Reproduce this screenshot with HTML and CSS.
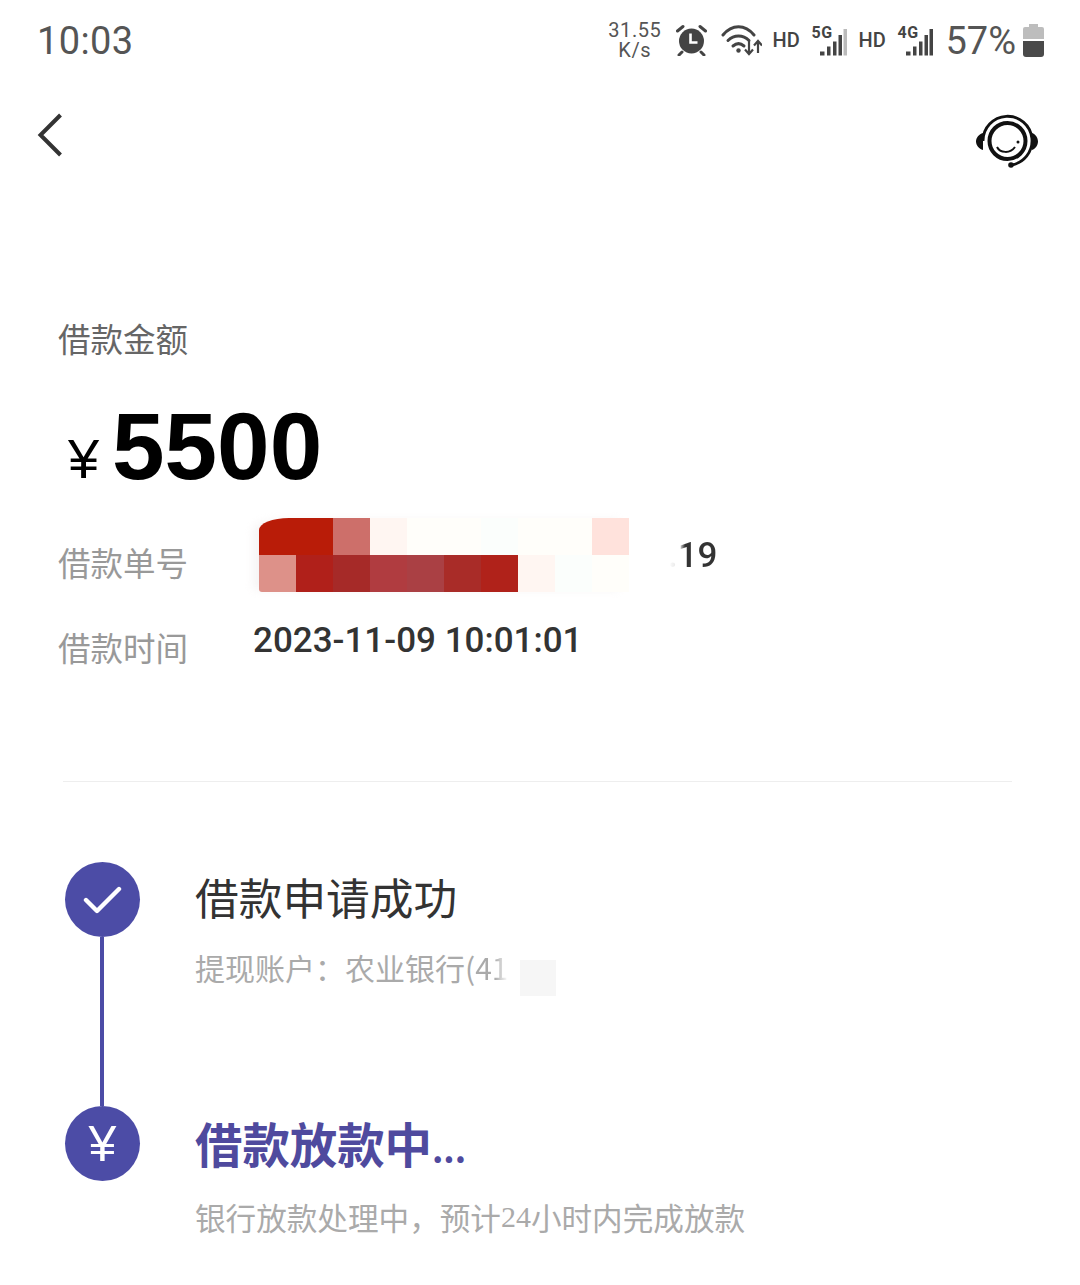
FILE: index.html
```html
<!DOCTYPE html>
<html lang="zh-CN">
<head>
  <meta charset="UTF-8" />
  <meta name="viewport" content="width=device-width, initial-scale=1.0"/>
  <title>借款详情</title>
  <link rel="stylesheet" href="styles.css">
</head>
<body>
  <div class="status">
    <span class="time">10:03</span>
    <div class="status-right">
      <span class="speed">31.55<br>K/s</span>
      <svg class="ic-alarm" width="31" height="32" viewBox="0 0 31 32">
        <circle cx="15.500" cy="17" r="12.500" fill="#444"/>
        <path d="M14.500 9.500v9h7" fill="none" stroke="#fff" stroke-width="2.600"/>
        <path d="M1.500 7l5.500-4.500M29.500 7L24 2.500M6 28l-3 3M25 28l3 3" stroke="#444" stroke-width="3" fill="none" stroke-linecap="round"/>
      </svg>
      <svg class="ic-wifi" width="41" height="32" viewBox="0 0 41 32">
        <g fill="none" stroke="#444" stroke-width="3" stroke-linecap="round">
          <path d="M2 11C11 0 24 0 33 11"/>
          <path d="M7 16.500c6-6 15-6 21 0"/>
          <path d="M12 22c3.500-3 7.500-3 11 0"/>
        </g>
        <circle cx="17.500" cy="26.500" r="2.200" fill="#444"/>
        <path d="M28 17v13M24 25.500l4 4.500 4-4.500M37 29V17M33 21.500L37 17l4 4.500" fill="none" stroke="#444" stroke-width="2.200"/>
      </svg>
      <span class="hd">HD</span>
      <div class="net">
        <span class="net-label">5G</span>
        <svg width="36" height="32" viewBox="0 0 36 32">
          <path d="M9 27.500h4.500v4H9zM16 22.500h3.500v9H16zM22 17.500h3.500v14H22zM27.500 11H31v20.500h-3.500z" fill="#444"/>
          <path d="M32.500 5H36v26.500h-3.500z" fill="#bbb"/>
        </svg>
      </div>
      <span class="hd hd-2">HD</span>
      <div class="net">
        <span class="net-label">4G</span>
        <svg width="36" height="32" viewBox="0 0 36 32">
          <path d="M9 27.500h4.500v4H9zM16 22.500h3.500v9H16zM22 17.500h3.500v14H22zM27.500 11H31v20.500h-3.500zM32.500 5H36v26.500h-3.500z" fill="#444"/>
        </svg>
      </div>
      <span class="pct">57%</span>
      <svg class="ic-batt" width="21" height="33" viewBox="0 0 21 33">
        <path d="M6 0h9v3h4a2 2 0 0 1 2 2v10H0V5a2 2 0 0 1 2-2h4z" fill="#bdbdbd"/>
        <path d="M0 17h21v13a3 3 0 0 1-3 3H3a3 3 0 0 1-3-3z" fill="#4a4a4a"/>
      </svg>
    </div>
  </div>

  <div class="nav">
    <svg class="ic-back" width="26" height="44" viewBox="0 0 26 44">
      <path d="M23.500 2L3.500 22l20 20" fill="none" stroke="#333" stroke-width="4"/>
    </svg>
    <svg width="62" height="62" viewBox="16 6 62 62">
      <circle cx="47.500" cy="41" r="18" fill="none" stroke="#111" stroke-width="4"/>
      <path d="M23 41A24.500 24.500 0 1 1 51 65" fill="none" stroke="#111" stroke-width="2.800"/>
      <path d="M23 33v17C19 49 16 45 16 41.500S19 34 23 33zM72 33v17c3.500-1 6-5 6-8.500S75.500 34 72 33z" fill="#111"/>
      <circle cx="51" cy="65" r="2.800" fill="#111"/>
      <path d="M37 47c3 6 13 7 18 0" fill="none" stroke="#111" stroke-width="2"/>
      <circle cx="58" cy="42" r="1.500" fill="#111"/>
    </svg>
  </div>

  <div class="summary">
    <div class="label">借款金额</div>
    <div class="amount"><span class="yen">¥</span>5500</div>

    <div class="row row-no">
      <div class="row-label">借款单号</div>
      <div class="mosaic">
        <i class="m1"></i><i class="m1"></i><i class="m2"></i><i class="m3"></i><i class="m4"></i><i class="m4"></i><i class="m5"></i><i class="m4"></i><i class="m4"></i><i class="m6"></i>
        <i class="m7"></i><i class="m8"></i><i class="m9"></i><i class="m10"></i><i class="m11"></i><i class="m12"></i><i class="m13"></i><i class="m3"></i><i class="m5"></i><i class="m4"></i>
      </div>
      <div class="row-tail">.19</div>
    </div>
    <div class="row row-time">
      <div class="row-label">借款时间</div>
      <div class="row-value">2023-11-09 10:01:01</div>
    </div>
    <div class="divider"></div>
  </div>

  <div class="timeline">
    <div class="step step-first">
      <div class="rail">
        <div class="dot">
          <svg width="40" height="32" viewBox="0 0 40 32">
            <path d="M3 16l11 11L36 5" fill="none" stroke="#fff" stroke-width="4.400" stroke-linecap="round" stroke-linejoin="round"/>
          </svg>
        </div>
        <div class="line"></div>
      </div>
      <div class="step-body">
        <div class="step-title">借款申请成功</div>
        <div class="step-sub">提现账户：农业银行(<span class="fade">41</span><span class="patch"></span></div>
      </div>
    </div>
    <div class="step">
      <div class="rail">
        <div class="dot dot-yen">¥</div>
      </div>
      <div class="step-body step-body-2">
        <div class="step-title active">借款放款中<span class="dots">...</span></div>
        <div class="step-sub">银行放款处理中，预计<span class="num">24</span>小时内完成放款</div>
      </div>
    </div>
  </div>
</body>
</html>
```

FILE: styles.css
```css
body { margin: 0; background: #fff; font-family: "Noto Sans CJK SC", "Liberation Sans", sans-serif; color: #333; }

.status { height: 80px; display: flex; align-items: center; justify-content: space-between; padding: 0 36px 0 37px; font-family: Roboto, sans-serif; color: #555; }
.time { font-size: 38px; letter-spacing: .4px; margin-top: 1px; }
.status-right { display: flex; align-items: center; }
.speed { font-size: 20px; line-height: 20px; text-align: center; letter-spacing: .6px; color: #555; }
.ic-alarm { margin-left: 15px; }
.ic-wifi { margin-left: 14px; }
.hd { font-size: 20px; font-weight: 500; color: #444; margin-left: 10px; width: 27px; }
.net { position: relative; margin-left: 12px; }
.net svg { display: block; }
.net-label { position: absolute; left: 0; top: -1px; font-size: 16px; font-weight: 700; letter-spacing: .5px; color: #444; }
.hd-2 { margin-left: 11px; }
.pct { font-size: 38px; margin-left: 12px; margin-top: 1px; color: #555; }
.ic-batt { margin-left: 7px; }

.nav { height: 114px; display: flex; align-items: center; justify-content: space-between; padding: 0 42px 0 37px; }
.ic-back { margin-top: -4px; }

.summary { padding: 0 58px; margin-top: 124px; }
.label { font-size: 32.500px; line-height: 40px; color: #666; }
.amount { margin-top: 38px; height: 100px; line-height: 100px; font-family: "Liberation Sans", sans-serif; font-size: 94.500px; font-weight: 700; color: #000; display: flex; }
.yen { font-size: 56px; font-weight: 400; width: 32px; margin: 13px 12px 0 10px; }

.row { display: flex; }
.row-label { font-size: 32.500px; line-height: 40px; color: #999; width: 195px; flex-shrink: 0; }
.row-no { margin-top: 22px; height: 74px; }
.row-no .row-label { width: 201px; margin-top: 24px; }
.row-tail { margin: 18px 0 0 39px; font-family: Roboto, sans-serif; font-size: 35px; line-height: 40px; font-weight: 500; background: linear-gradient(90deg, #fff 0, #ddd 12px, #333 34%); -webkit-background-clip: text; background-clip: text; color: transparent; }
.mosaic { display: grid; grid-template-columns: repeat(10, 37px); grid-auto-rows: 37px; width: 370px; border-radius: 30px 0 0 3px / 12px 0 0 3px; overflow: hidden; box-shadow: -8px 0 8px -2px rgba(240, 236, 236, .6); }
.m1 { background: #b91c08; }
.m2 { background: #cd6f6a; }
.m3 { background: #fff6f2; }
.m4 { background: #fffefa; }
.m5 { background: #fbfefc; }
.m6 { background: #ffe2dc; }
.m7 { background: #dd9189; }
.m8 { background: #b0201a; }
.m9 { background: #a62a28; }
.m10 { background: #b03c40; }
.m11 { background: #aa4044; }
.m12 { background: #a92c28; }
.m13 { background: #b0221a; }

.row-time { margin-top: 29px; }
.row-time .row-label { margin-top: 6px; }
.row-value { font-family: Roboto, sans-serif; font-size: 35px; line-height: 40px; font-weight: 500; color: #333; }

.divider { height: 1px; background: #eee; margin: 114px 10px 0 5px; }

.timeline { margin-top: 80px; padding-left: 65px; }
.step { display: flex; }
.step-first { height: 244px; }
.rail { width: 75px; display: flex; flex-direction: column; align-items: center; flex-shrink: 0; }
.dot { width: 75px; height: 75px; border-radius: 50%; background: #4c4ca6; display: flex; align-items: center; justify-content: center; flex-shrink: 0; color: #fff; }
.dot-yen { font-family: "Liberation Sans", sans-serif; font-size: 50px; }
.line { width: 4px; flex: 1; background: #4c4ca6; margin-left: -1px; }
.step-body { margin-left: 55px; padding-top: 4px; }
.step-body-2 { padding-top: 7px; }
.step-title { font-size: 43.700px; line-height: 60px; color: #333; }
.step-title.active { font-size: 47.400px; font-weight: 700; color: #4f4a9e; }
.dots { font-size: 35px; }
.step-sub { font-size: 30px; line-height: 40px; color: #aaa; margin-top: 21px; display: flex; align-items: center; }
.step-body-2 .step-sub { margin-top: 19px; font-size: 30.600px; }
.num { font-family: "Liberation Serif", serif; font-size: 30px; }
.fade { background: linear-gradient(90deg, #aaa 60%, #fff 100%); -webkit-background-clip: text; background-clip: text; color: transparent; }
.patch { width: 36px; height: 36px; background: #f6f6f6; margin-left: 12px; transform: translateY(11px); }
```
